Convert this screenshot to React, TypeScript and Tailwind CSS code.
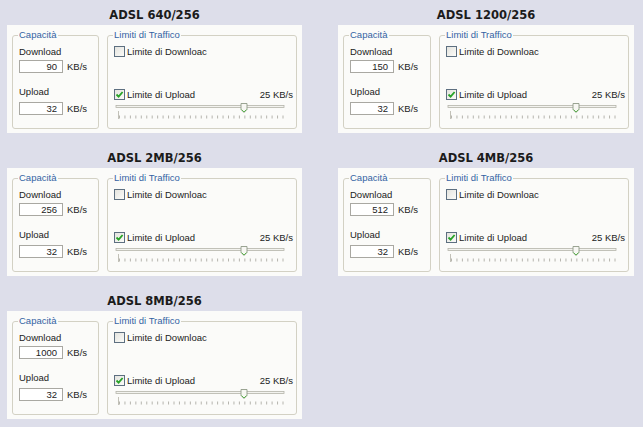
import React from "react";

type Conn = { title: string; down: string };

const connections: Conn[] = [
  { title: "ADSL 640/256", down: "90" },
  { title: "ADSL 1200/256", down: "150" },
  { title: "ADSL 2MB/256", down: "256" },
  { title: "ADSL 4MB/256", down: "512" },
  { title: "ADSL 8MB/256", down: "1000" },
];

const Checkbox = ({ checked }: { checked?: boolean }) => (
  <div className="w-[11px] h-[11px] shrink-0 border border-[#5d6f80] bg-gradient-to-br from-[#e4e4df] to-[#fbfbf8] flex items-center justify-center">
    {checked && (
      <svg width="9" height="9" viewBox="0 0 9 9">
        <path d="M1.5 4.5 L3.6 6.6 L7.6 2" fill="none" stroke="#27a327" strokeWidth="1.8" />
      </svg>
    )}
  </div>
);

const Slider = () => (
  <svg width="179" height="17" viewBox="0 0 179 17" className="mt-[3px] block">
    <rect x="2" y="2.5" width="168" height="2" fill="#f3f3ef" stroke="#b4b3aa" strokeWidth="0.8" />
    <line x1="4.5" y1="8" x2="4.5" y2="16" stroke="#c2c1b8" strokeWidth="1" />
    {Array.from({ length: 31 }, (_, i) => (
      <line
        key={i}
        x1={5.5 + i * 5.45}
        y1="12.5"
        x2={5.5 + i * 5.45}
        y2="15.5"
        stroke="#aeada5"
        strokeWidth="0.9"
      />
    ))}
    <path d="M127 0.5 H133 V6.5 L130 9.5 L127 6.5 Z" fill="#f7f7f3" stroke="#8f9a88" strokeWidth="0.9" />
    <path d="M127.5 6.5 L130 9 L132.5 6.5" fill="none" stroke="#5db34f" strokeWidth="1" />
  </svg>
);

const Field = ({ value }: { value: string }) => (
  <div className="flex items-center gap-[4px]">
    <div className="w-[44px] h-[13px] border border-[#a9a8a2] bg-white text-right pr-[5px] leading-[11px]">
      {value}
    </div>
    <span className="leading-[11px]">KB/s</span>
  </div>
);

const Panel = ({ conn }: { conn: Conn }) => (
  <div>
    <div className="h-[25px] pt-[10px] text-center text-[11.5px] leading-[11px] font-bold text-[#1b1b1b] font-['DejaVu_Sans',Verdana,sans-serif]">
      {conn.title}
    </div>
    <div className="h-[108px] bg-[#fbfbf9] flex gap-[8px] px-[5px] pt-[4px] text-[9.5px] text-[#222222] font-['Liberation_Sans',Arial,sans-serif]">
      <fieldset className="w-[88px] h-[100px] border border-[#d3d1c4] rounded-[3px] pl-[6px]">
        <legend className="-ml-[1px] px-[1px] leading-[12px] text-[#3463a3]">Capacità</legend>
        <div className="mt-[5px] leading-[12px]">Download</div>
        <div className="mt-[2px]">
          <Field value={conn.down} />
        </div>
        <div className="mt-[13px] leading-[12px]">Upload</div>
        <div className="mt-[4px]">
          <Field value="32" />
        </div>
      </fieldset>
      <fieldset className="w-[190px] h-[100px] border border-[#d3d1c4] rounded-[3px] pl-[6px] pr-[3px]">
        <legend className="-ml-[1px] px-[1px] leading-[12px] text-[#3463a3]">Limiti di Traffico</legend>
        <div className="mt-[5px] flex items-center gap-[2px] h-[11px]">
          <Checkbox />
          <span className="leading-[11px]">Limite di Downloac</span>
        </div>
        <div className="mt-[32px] flex items-center gap-[2px] h-[11px]">
          <Checkbox checked />
          <span className="leading-[11px]">Limite di Upload</span>
          <span className="ml-auto leading-[11px]">25 KB/s</span>
        </div>
        <Slider />
      </fieldset>
    </div>
  </div>
);

export default function App() {
  return (
    <div className="w-[643px] h-[427px] bg-[#dddeea] pl-[7px] overflow-hidden">
      <div className="grid grid-cols-[295px_296px] gap-x-[36px] gap-y-[10px]">
        {connections.map((c) => (
          <Panel key={c.title} conn={c} />
        ))}
      </div>
    </div>
  );
}
